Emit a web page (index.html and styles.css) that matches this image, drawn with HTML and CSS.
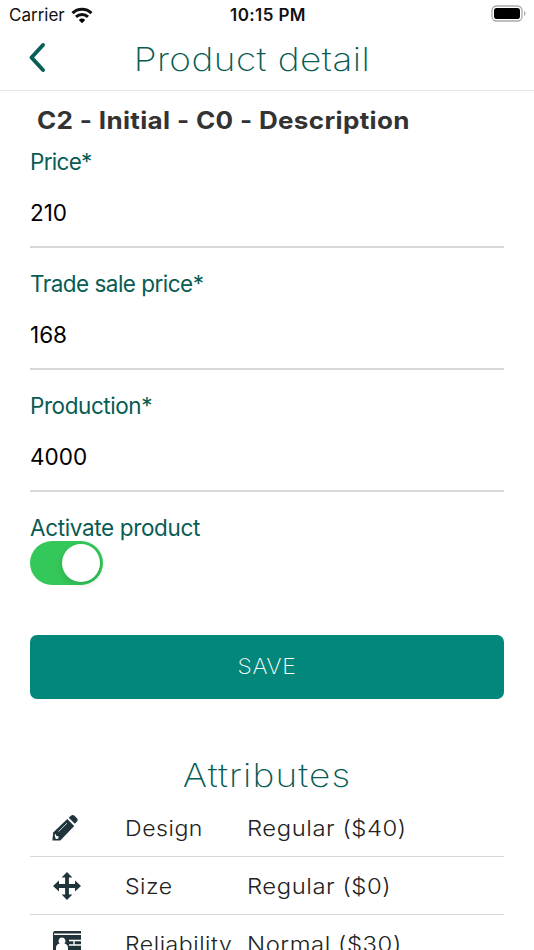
FILE: index.html
```html
<!DOCTYPE html>
<html lang="en">
<head>
<meta charset="utf-8">
<title>Product detail</title>
<link rel="stylesheet" href="styles.css">
</head>
<body>
<div class="screen">
  <div class="status">
    <div class="carrier"><span>Carrier</span>
      <svg width="22" height="17" viewBox="0 0 22 17"><path d="M11 16.200 14.200 13A4.800 4.800 0 0 0 7.800 13Z"/><path class="arc" d="M5 9.800A8.700 8.700 0 0 1 17 9.800M1.500 6.100A13.600 13.600 0 0 1 20.500 6.100"/></svg>
    </div>
    <time>10:15 PM</time>
    <svg class="battery" width="36" height="18" viewBox="0 0 36 18"><rect class="shell" x="1" y="1" width="30" height="15" rx="4.5"/><rect x="3" y="3" width="26" height="11" rx="2.8"/><path class="tip" d="M33 6v5c2-1 2-4 0-5Z"/></svg>
  </div>
  <header class="header">
    <svg class="back" width="20" height="32" viewBox="0 0 20 32"><path d="M17 4 5.500 16.500 17 29"/></svg>
    <h1>Product detail</h1>
  </header>
  <main>
    <h2>C2 - Initial - C0 - Description</h2>
    <div class="field"><label class="price" for="price">Price*</label><input id="price" value="210"></div>
    <div class="field"><label class="trade" for="trade">Trade sale price*</label><input id="trade" value="168"></div>
    <div class="field"><label class="production" for="production">Production*</label><input id="production" value="4000"></div>
    <div class="activate"><span class="label">Activate product</span><div class="switch"><div class="knob"></div></div></div>
    <button><span>SAVE</span></button>
    <h3>Attributes</h3>
    <div class="row">
      <svg width="30" height="30" viewBox="0 0 30 30"><path d="M.4 27.400 1.200 19.600 15.300 6 22.200 12.900 8.300 27.400Z"/><path d="m16.700 4.700 2.200-2c1.200-1.100 2.500-1.100 3.600 0l2.400 2.500c1 1 1 2.200 0 3.200l-2 2.400Z"/><path class="cut thin" d="m6.500 18.500 8.500-8.300"/><path class="person" d="m2.500 21.800 1.300-.7.600 1.800 2 .3.200 2-1.400.8-1.600-.3Z"/></svg>
      <span>Design</span><span class="value">Regular ($40)</span>
    </div>
    <div class="row">
      <svg width="30" height="30" viewBox="0 0 30 30"><path d="m15 1 5.400 5.600h-3.500v6.500H23V9.600l6 5.400-6 5.400v-3.500h-6.100v6.500h3.500L15 29l-5.400-5.600h3.500v-6.500H7v3.500L1 15l6-5.400v3.500h6.100V6.600H9.600Z"/></svg>
      <span>Size</span><span class="value">Regular ($0)</span>
    </div>
    <div class="row">
      <svg width="30" height="30" viewBox="0 0 30 30"><path d="M1 4Q1 2 3 2h26v25H3q-2 0-2-2Z"/><path class="cut" d="M2 5.300h27M17 11.500h12M17 16h12M22 12v4"/><path class="person" d="M10 8.500a3.500 3.500 0 0 1 2.300 6.100q3.700.8 3.700 4.400v3H4v-3q0-3.600 3.700-4.400A3.500 3.500 0 0 1 10 8.500Z"/></svg>
      <span>Reliability</span><span class="value">Normal ($30)</span>
    </div>
  </main>
</div>
</body>
</html>
```
FILE: styles.css
```css
* { box-sizing: border-box; }
body { margin: 0; background: #fff; font-family: Inter, "Liberation Sans", sans-serif; }
.screen { width: 534px; height: 950px; overflow: hidden; }
.status { display: grid; grid-template-columns: 1fr auto 1fr; align-items: center; height: 28px; padding: 0 7px 0 9px; font-size: 17px; color: #111; }
.carrier { display: flex; align-items: center; gap: 6px; margin-top: 2px; }
.carrier .arc { fill: none; stroke: #111; stroke-width: 3; }
.status time { margin-top: 1px; font-weight: 600; font-size: 17px; letter-spacing: .4px; }
.battery { justify-self: end; }
.battery .shell { fill: none; stroke: #aaa; stroke-width: 1.3; }
.battery .tip { fill: #aaa; }
.header { display: grid; grid-template-columns: 60px 1fr 90px; align-items: center; height: 63px; padding: 0 0 1px; border-bottom: 1px solid #e6e6e6; }
.back { margin: -3px 0 0 26px; fill: none; stroke: #075f58; stroke-width: 4; stroke-linecap: round; stroke-linejoin: round; }
h1, h3 { margin: 0; font-weight: 250; color: #075c53; text-align: center; white-space: nowrap; transform: scaleX(1.12); }
h1 { font-size: 33px; letter-spacing: .4px; line-height: 40px; }
main { padding: 13px 30px 0; }
h2 { margin: 0 0 11px 7px; color: #333; font-size: 24px; font-weight: 700; line-height: 33px; letter-spacing: .3px; white-space: nowrap; transform: scaleX(1.085); transform-origin: left; }
.field { display: flex; flex-direction: column; height: 100px; margin-bottom: 22px; }
label, .label { line-height: 28px; font-size: 22.500px; letter-spacing: -.35px; color: #075c53; }
.price { letter-spacing: -.7px; }
.trade { letter-spacing: -.52px; }
.production { letter-spacing: -.43px; }
input { height: 72px; padding: 2px 0 0; border: 0; border-bottom: 2px solid #d8d8d8; border-radius: 0; background: none; outline: none; color: #000; font: 22.500px/28px Inter, "Liberation Sans", sans-serif; }
.activate { height: 121px; }
.label { display: block; }
.switch { display: flex; justify-content: flex-end; width: 73px; height: 44px; margin: -1px 0 0 -.5px; padding: 3px; border-radius: 22px; background: #34c759; }
.knob { width: 38px; height: 38px; border-radius: 50%; background: #fff; box-shadow: 0 3px 7px #0002; }
button { display: block; width: 474px; height: 64px; padding: 0; border: 0; border-radius: 7px; background: #04877b; color: #fff; font: 200 21px/64px Inter, sans-serif; letter-spacing: .6px; }
button span { display: block; transform: scaleX(1.09); }
h3 { margin-top: 56px; font-size: 33px; line-height: 40px; letter-spacing: 1px; }
.row { display: grid; grid-template-columns: 95px 122px 1fr; align-items: center; height: 58px; border-bottom: 1px solid #d6d6d6; color: #222; font-size: 22px; font-weight: 300; letter-spacing: .5px; white-space: nowrap; }
.row span { transform: scaleX(1.05); transform-origin: left; }
.row .value { transform: scaleX(1.085); }
h3 + .row { margin-top: 4px; }
.row svg { margin-left: 22px; fill: #20343b; }
.row .cut { fill: none; stroke: #fff; stroke-width: 1.4; }
.row .thin { stroke-width: .8; }
.row .person { fill: #fff; }
```
